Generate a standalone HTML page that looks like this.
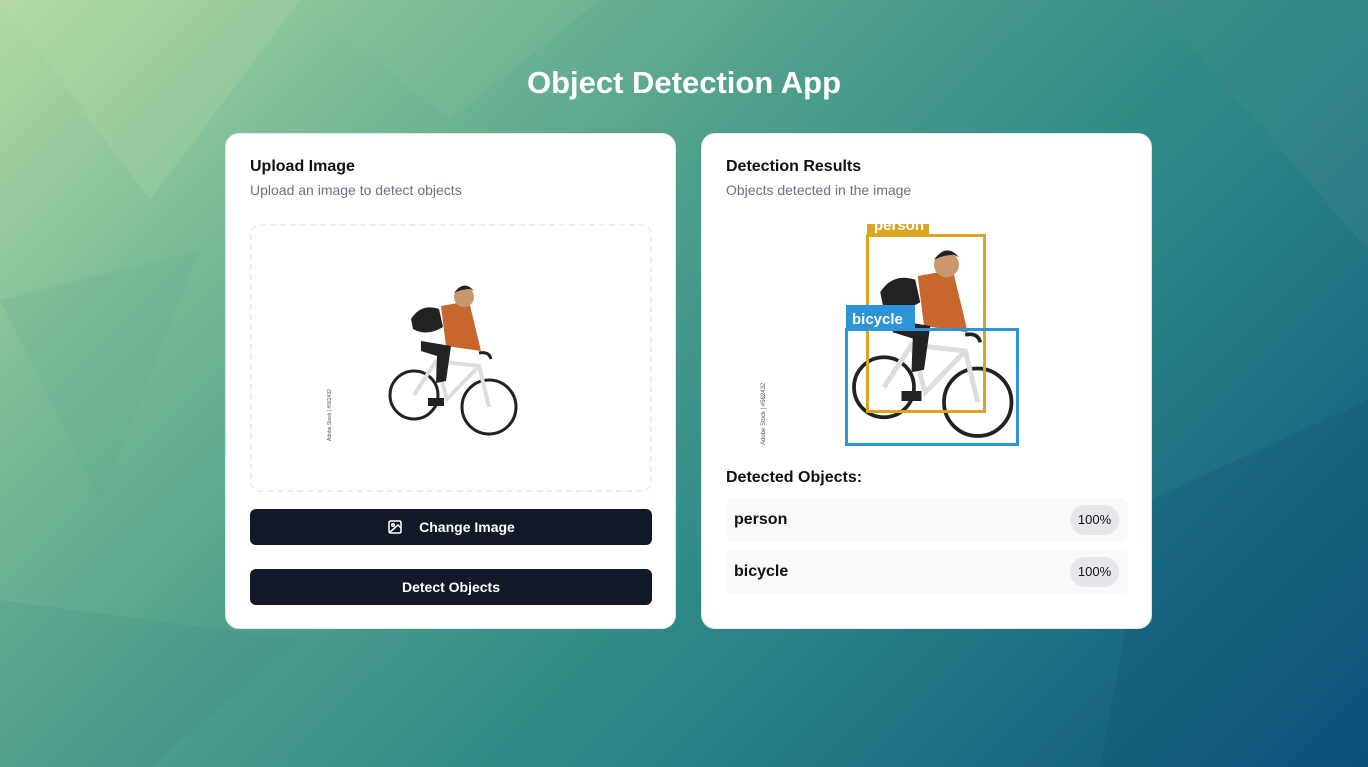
<!DOCTYPE html>
<html><head><meta charset="utf-8">
<style>
*{box-sizing:border-box;margin:0;padding:0}
body{width:1368px;height:767px;overflow:hidden;font-family:"Liberation Sans",sans-serif;position:relative;
background:linear-gradient(135deg,#b4d9a4 0%,#7fbf98 18%,#4f9f8c 40%,#2f8a86 60%,#1d6f82 80%,#0c527a 100%);}
.bg{position:absolute;inset:0}
h1{position:absolute;top:65px;width:100%;text-align:center;color:#fff;font-size:31px;font-weight:bold}
.card{position:absolute;top:133px;width:451px;height:496px;background:#fff;border-radius:14px;border:1px solid #e5e7eb}
.t{position:absolute;left:24px;top:24px;font-size:16px;font-weight:bold;color:#111}
.s{position:absolute;left:24px;top:48px;font-size:14px;color:#6b7280}
.drop{position:absolute;left:24px;top:90px;width:402px;height:268px;border:2px dashed #eceef1;border-radius:10px}
.btn{position:absolute;left:24px;width:402px;height:36px;background:#111827;border-radius:6px;color:#fff;font-size:14px;font-weight:bold;display:flex;align-items:center;justify-content:center}
.item{position:absolute;left:24px;width:402px;height:44px;background:#f8f9fb;border-radius:8px}
.item span{position:absolute;left:8px;top:13px;font-size:16px;color:#111;font-weight:bold}
.item b{position:absolute;right:9px;top:7px;width:49px;height:30px;border-radius:15px;background:#e5e7eb;font-size:13px;font-weight:normal;text-align:center;line-height:30px;color:#111}
</style></head><body>
<svg class="bg" width="1368" height="767">
<polygon points="0,0 300,0 150,200" fill="#c0e0aa" opacity=".2"/>
<polygon points="300,0 600,0 450,120" fill="#8cc79c" opacity=".2"/>
<polygon points="0,300 200,250 100,500" fill="#5fa890" opacity=".2"/>
<polygon points="1150,0 1368,0 1368,250" fill="#4e8f8c" opacity=".2"/>
<polygon points="1150,500 1368,400 1368,767 1100,767" fill="#0a4c76" opacity=".2"/>
<polygon points="0,600 300,640 150,767 0,767" fill="#3c8c88" opacity=".2"/>
</svg>
<h1>Object Detection App</h1>
<div class="card" style="left:225px">
<div class="t">Upload Image</div><div class="s">Upload an image to detect objects</div>
<div class="drop"></div>
<svg style="position:absolute;left:0;top:0" width="451" height="496">
<g transform="translate(-225,-133)">
<text x="330" y="440" font-size="5" fill="#555" transform="rotate(-90 330 440)">Adobe Stock | #562432</text>
<g fill="none" stroke="#222" stroke-width="3"><circle cx="413" cy="394" r="24"/><circle cx="488" cy="406" r="27"/></g>
<path d="M413 394 L435 360 L478 365 L488 406 M435 360 L446 398 L478 365" stroke="#ddd" stroke-width="4" fill="none"/>
<path d="M478 352 q10 -2 12 6" stroke="#222" stroke-width="3" fill="none"/>
<path d="M440 305 L468 300 L480 350 L445 345 Z" fill="#c8672d"/>
<path d="M410 318 q10 -16 28 -10 l4 18 q-16 10 -30 2z" fill="#222"/>
<path d="M420 340 L450 345 L445 380 L435 382 L436 355 L420 350Z" fill="#222"/>
<rect x="427" y="397" width="16" height="8" fill="#222"/>
<circle cx="463" cy="296" r="10" fill="#c9966e"/><path d="M453 292 q10 -14 20 -2 l-4 -2 q-8 0 -16 4z" fill="#222"/>
</g></svg>
<div class="btn" style="top:375px"><svg width="16" height="16" viewBox="0 0 16 16" style="margin-right:16px" fill="none" stroke="#fff" stroke-width="1.5"><rect x="2" y="2" width="12" height="12" rx="1.5"/><circle cx="6" cy="6" r="1.3"/><path d="M3 13 L11 6 L14 9"/></svg>Change Image</div>
<div class="btn" style="top:435px">Detect Objects</div>
</div>
<div class="card" style="left:701px">
<div class="t">Detection Results</div><div class="s">Objects detected in the image</div>
<svg style="position:absolute;left:0;top:0" width="451" height="496">
<g transform="translate(-701,-133)">
<rect x="755" y="223" width="342" height="226" fill="#fff"/>
<text x="764" y="444" font-size="6" fill="#555" transform="rotate(-90 764 444)">Adobe Stock | #562432</text>
<g transform="translate(883,390) scale(1.25) translate(-413,-397)">
<g fill="none" stroke="#222" stroke-width="3"><circle cx="413" cy="394" r="24"/><circle cx="488" cy="406" r="27"/></g>
<path d="M413 394 L435 360 L478 365 L488 406 M435 360 L446 398 L478 365" stroke="#ddd" stroke-width="4" fill="none"/>
<path d="M478 352 q10 -2 12 6" stroke="#222" stroke-width="3" fill="none"/>
<path d="M440 305 L468 300 L480 350 L445 345 Z" fill="#c8672d"/>
<path d="M410 318 q10 -16 28 -10 l4 18 q-16 10 -30 2z" fill="#222"/>
<path d="M420 340 L450 345 L445 380 L435 382 L436 355 L420 350Z" fill="#222"/>
<rect x="427" y="397" width="16" height="8" fill="#222"/>
<circle cx="463" cy="296" r="10" fill="#c9966e"/><path d="M453 292 q10 -14 20 -2 l-4 -2 q-8 0 -16 4z" fill="#222"/>
</g>
<rect x="866.5" y="234.5" width="117" height="176" fill="none" stroke="#daa520" stroke-width="3"/>
<rect x="866" y="223" width="62" height="10" fill="#daa520"/>
<text x="873" y="229" font-size="15" font-weight="bold" fill="#fff">person</text>
<rect x="845.5" y="328.5" width="171" height="115" fill="none" stroke="#2e94d8" stroke-width="3"/>
<rect x="845" y="304" width="69" height="24" fill="#2e94d8"/>
<text x="851" y="323" font-size="15" font-weight="bold" fill="#fff">bicycle</text>
</g></svg>
<div style="position:absolute;left:24px;top:335px;font-size:16px;color:#111;font-weight:bold">Detected Objects:</div>
<div class="item" style="top:364px"><span>person</span><b>100%</b></div>
<div class="item" style="top:416px"><span>bicycle</span><b>100%</b></div>
</div>
</body></html>
